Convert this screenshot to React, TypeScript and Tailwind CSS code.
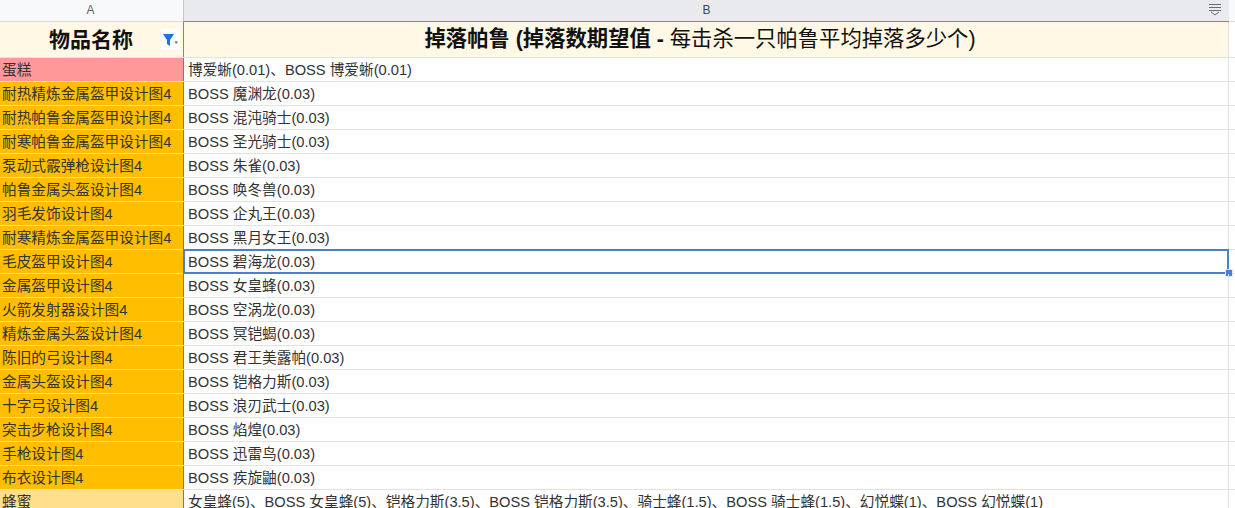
const rows = [
  { name: "蛋糕", drops: "博爱蜥(0.01)、BOSS 博爱蜥(0.01)", color: "bg-[#ff9999]" },
  { name: "耐热精炼金属盔甲设计图4", drops: "BOSS 魔渊龙(0.03)" },
  { name: "耐热帕鲁金属盔甲设计图4", drops: "BOSS 混沌骑士(0.03)" },
  { name: "耐寒帕鲁金属盔甲设计图4", drops: "BOSS 圣光骑士(0.03)" },
  { name: "泵动式霰弹枪设计图4", drops: "BOSS 朱雀(0.03)" },
  { name: "帕鲁金属头盔设计图4", drops: "BOSS 唤冬兽(0.03)" },
  { name: "羽毛发饰设计图4", drops: "BOSS 企丸王(0.03)" },
  { name: "耐寒精炼金属盔甲设计图4", drops: "BOSS 黑月女王(0.03)" },
  { name: "毛皮盔甲设计图4", drops: "BOSS 碧海龙(0.03)", selected: true },
  { name: "金属盔甲设计图4", drops: "BOSS 女皇蜂(0.03)" },
  { name: "火箭发射器设计图4", drops: "BOSS 空涡龙(0.03)" },
  { name: "精炼金属头盔设计图4", drops: "BOSS 冥铠蝎(0.03)" },
  { name: "陈旧的弓设计图4", drops: "BOSS 君王美露帕(0.03)" },
  { name: "金属头盔设计图4", drops: "BOSS 铠格力斯(0.03)" },
  { name: "十字弓设计图4", drops: "BOSS 浪刃武士(0.03)" },
  { name: "突击步枪设计图4", drops: "BOSS 焰煌(0.03)" },
  { name: "手枪设计图4", drops: "BOSS 迅雷鸟(0.03)" },
  { name: "布衣设计图4", drops: "BOSS 疾旋鼬(0.03)" },
  {
    name: "蜂蜜",
    drops: "女皇蜂(5)、BOSS 女皇蜂(5)、铠格力斯(3.5)、BOSS 铠格力斯(3.5)、骑士蜂(1.5)、BOSS 骑士蜂(1.5)、幻悦蝶(1)、BOSS 幻悦蝶(1)",
    color: "bg-[#ffe08a]",
  },
];

export default function App() {
  return (
    <div className="h-[508px] w-[1235px] overflow-hidden bg-white text-[14.67px] text-[#333333] font-['Liberation_Sans','Noto_Sans_CJK_SC',sans-serif]">
      {/* column letters */}
      <div className="flex h-[22px] bg-[#e9eaed]">
        <div className="flex w-[183px] items-center justify-center border-b border-[#dcdcdc] bg-[#f8f9fa] pb-[2px] pr-[2px] text-[12px] text-[#5f6368]">A</div>
        <div className="flex flex-1 items-center justify-center border-l border-[#c7c7c7] border-b border-b-[#5b8bc9] pb-[2px] text-[12px] text-[#444746]">B</div>
        <div className="flex w-[6px] border-b border-[#dcdcdc] bg-[#f8f9fa]" />
      </div>
      <div className="relative">
        <svg className="absolute right-[13px] top-[-19px]" width="14" height="14" viewBox="0 0 14 14" fill="none" stroke="#6b6b6b" strokeWidth="1">
          <path d="M1 1.5h12M1 4.5h12M1 7.5h12" />
          <path d="M3 9l4 3 4-3" />
        </svg>
      </div>

      {/* title row */}
      <div className="flex h-[36px] border-b border-[#e2e2e2]">
        <div className="relative flex w-[183px] items-center justify-center bg-[#fff8e5] pr-[1px] text-[21px] font-bold text-[#111111]">
          物品名称
          <span className="absolute right-[3px] top-[7px] flex h-[21px] w-[19px] items-center justify-center bg-white">
            <svg width="17" height="16" viewBox="0 0 17 16">
              <path d="M1 2h11L8 8v6l-3-2V8z" fill="#1a73e8" />
              <path d="M12.5 9.5h3.5L14.2 12z" fill="#5f6368" />
            </svg>
          </span>
        </div>
        <div className="flex w-[1046px] items-center justify-center whitespace-pre border-l border-[#5b8bc9] border-r border-r-[#e2e2e2] bg-[#fff8e5] pr-[12px] text-[21.33px] text-[#111111]">
          <span className="font-bold">掉落帕鲁 (掉落数期望值 - </span>
          <span>每击杀一只帕鲁平均掉落多少个)</span>
        </div>
      </div>

      {rows.map((row) => (
        <div key={row.name} className="flex h-[24px] border-b border-[#e2e2e2]">
          <div className={`flex w-[183px] items-center whitespace-nowrap pl-[2px] pt-[1px] ${row.color ?? "bg-[#ffbf00]"}`}>
            {row.name}
          </div>
          <div className="relative flex w-[1046px] items-center whitespace-nowrap border-l border-[#5f7f9f] border-r border-r-[#e2e2e2] pl-[4px] pt-[1px]">
            {row.drops}
            {row.selected && (
              <>
                <span className="absolute -bottom-[1px] -left-[1px] -right-[1px] -top-[1px] border-2 border-[#4a7fd0]" />
                <span className="absolute bottom-[-4px] right-[-5px] h-[8px] w-[8px] border border-[#dbe6f7] bg-[#4a7fd0]" />
              </>
            )}
          </div>
        </div>
      ))}
    </div>
  );
}
